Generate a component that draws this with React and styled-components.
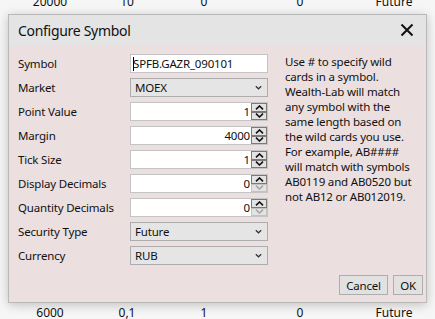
import React from "react";
import styled, { createGlobalStyle } from "styled-components";

const Global = createGlobalStyle`
  html, body { margin: 0; padding: 0; background: #f5f5f5; }
  body { font-family: "Noto Sans", "Open Sans", sans-serif; overflow: hidden; }
`;

const Page = styled.div`
  width: 435px;
  height: 319px;
  overflow: hidden;
  display: flex;
  flex-direction: column;
  background: #f6f6f6;
`;

const GridRow = styled.div`
  display: grid;
  grid-template-columns: 100px 54px 100px 92px 96px;
  height: ${(p) => p.$h}px;
  flex: none;
  overflow: hidden;
  font-size: 12px;
  color: #111;
`;

const Cell = styled.div`
  text-align: center;
  line-height: 14px;
  margin-top: ${(p) => p.$top}px;
`;

const Dialog = styled.div`
  margin-left: 8px;
  width: 419px;
  height: 289px;
  box-sizing: border-box;
  flex: none;
  display: flex;
  flex-direction: column;
  background: #ecdfdf;
  border: 1px solid #b9b9b9;
  box-shadow: 0 2px 10px rgba(0, 0, 0, 0.22);
`;

const TitleBar = styled.div`
  height: 30px;
  flex: none;
  display: flex;
  align-items: center;
  justify-content: space-between;
  padding: 0 12px 0 9px;
  background: #e4e4e4;
`;

const Title = styled.div`
  font-size: 14px;
  letter-spacing: -0.3px;
  color: #111;
  padding-top: 1px;
`;

const CloseIcon = styled.svg`
  width: 14px;
  height: 14px;
  display: block;
`;

const Body = styled.div`
  flex: 1;
  display: flex;
  padding: 9px 0 0 9px;
  font-size: 11.5px;
  letter-spacing: -0.18px;
  color: #111;
`;

const Form = styled.div`
  display: grid;
  grid-template-columns: 112px 138px;
  grid-auto-rows: 19px;
  row-gap: 5px;
  align-items: center;
`;

const Label = styled.div`
  line-height: 19px;
  white-space: nowrap;
`;

const TextBox = styled.div`
  height: 19px;
  box-sizing: border-box;
  background: #fff;
  border: 1px solid #c4c4c4;
  display: flex;
  align-items: center;
  padding-left: 2px;
  white-space: nowrap;
`;

const Caret = styled.span`
  display: inline-block;
  width: 1px;
  height: 14px;
  background: #000;
  margin-right: -1px;
`;

const Combo = styled.div`
  height: 19px;
  box-sizing: border-box;
  background: #e5e5e5;
  border: 1px solid #adadad;
  display: flex;
  align-items: center;
  justify-content: space-between;
  padding: 0 5px 0 4px;
`;

const Chevron = styled.svg`
  width: 7px;
  height: 5px;
  display: block;
`;

const NumberBox = styled.div`
  height: 19px;
  box-sizing: border-box;
  background: #fff;
  border: 1px solid #c4c4c4;
  display: flex;
  align-items: stretch;
`;

const NumberValue = styled.div`
  flex: 1;
  text-align: right;
  line-height: 17px;
  padding-right: 1px;
`;

const Spinner = styled.div`
  width: 16px;
  display: flex;
  flex-direction: column;
`;

const SpinButton = styled.div`
  flex: 1;
  box-sizing: border-box;
  background: #e3e3e3;
  border: 1px solid ${(p) => (p.$disabled ? "#c2c2c2" : "#7a7a7a")};
  display: flex;
  align-items: center;
  justify-content: center;
`;

const Arrow = styled.svg`
  width: 9px;
  height: 5px;
  display: block;
`;

const Help = styled.div`
  margin-left: 17px;
  margin-top: 0;
  line-height: 15px;
  white-space: nowrap;
`;

const Footer = styled.div`
  display: flex;
  justify-content: flex-end;
  gap: 5px;
  padding: 0 3px 7px 0;
`;

const Button = styled.button`
  height: 20px;
  min-width: ${(p) => p.$w}px;
  box-sizing: border-box;
  padding: 0 6px;
  background: #e1e1e1;
  border: 1px solid #adadad;
  font-family: inherit;
  font-size: 11.5px;
  letter-spacing: -0.18px;
  color: #111;
  line-height: 17px;
`;

const ChevronDown = () => (
  <Chevron viewBox="0 0 7 5">
    <path d="M0.8 1.2 L3.5 3.8 L6.2 1.2" fill="none" stroke="#333" strokeWidth="1.2" />
  </Chevron>
);

const SpinArrow = ({ up, disabled }) => (
  <Arrow viewBox="0 0 9 5">
    <path
      d={up ? "M1 4.3 L4.5 1 L8 4.3" : "M1 0.7 L4.5 4 L8 0.7"}
      fill="none"
      stroke={disabled ? "#a8a8a8" : "#111"}
      strokeWidth="1.6"
    />
  </Arrow>
);

const NumberField = ({ value, downDisabled }) => (
  <NumberBox>
    <NumberValue>{value}</NumberValue>
    <Spinner>
      <SpinButton>
        <SpinArrow up />
      </SpinButton>
      <SpinButton $disabled={downDisabled}>
        <SpinArrow disabled={downDisabled} />
      </SpinButton>
    </Spinner>
  </NumberBox>
);

const ComboField = ({ value }) => (
  <Combo>
    <span>{value}</span>
    <ChevronDown />
  </Combo>
);

const topRow = ["20000", "10", "0", "0", "Future"];
const bottomRow = ["6000", "0,1", "1", "0", "Future"];

const helpLines = [
  "Use # to specify wild",
  "cards in a symbol.",
  "Wealth-Lab will match",
  "any symbol with the",
  "same length based on",
  "the wild cards you use.",
  "For example, AB####",
  "will match with symbols",
  "AB0119 and AB0520 but",
  "not AB12 or AB012019.",
];

export default function App() {
  return (
    <Page>
      <Global />
      <GridRow $h={14}>
        {topRow.map((t, i) => (
          <Cell key={i} $top={-5}>
            {t}
          </Cell>
        ))}
      </GridRow>
      <Dialog>
        <TitleBar>
          <Title>Configure Symbol</Title>
          <CloseIcon viewBox="0 0 14 14">
            <path d="M1.5 1.5 L12.5 12.5 M12.5 1.5 L1.5 12.5" stroke="#111" strokeWidth="2" />
          </CloseIcon>
        </TitleBar>
        <Body>
          <Form>
            <Label>Symbol</Label>
            <TextBox>
              <Caret />
              SPFB.GAZR_090101
            </TextBox>
            <Label>Market</Label>
            <ComboField value="MOEX" />
            <Label>Point Value</Label>
            <NumberField value="1" />
            <Label>Margin</Label>
            <NumberField value="4000" />
            <Label>Tick Size</Label>
            <NumberField value="1" />
            <Label>Display Decimals</Label>
            <NumberField value="0" downDisabled />
            <Label>Quantity Decimals</Label>
            <NumberField value="0" downDisabled />
            <Label>Security Type</Label>
            <ComboField value="Future" />
            <Label>Currency</Label>
            <ComboField value="RUB" />
          </Form>
          <Help>
            {helpLines.map((l, i) => (
              <div key={i}>{l}</div>
            ))}
          </Help>
        </Body>
        <Footer>
          <Button $w={49}>Cancel</Button>
          <Button $w={30}>OK</Button>
        </Footer>
      </Dialog>
      <GridRow $h={16}>
        {bottomRow.map((t, i) => (
          <Cell key={i} $top={3}>
            {t}
          </Cell>
        ))}
      </GridRow>
    </Page>
  );
}
